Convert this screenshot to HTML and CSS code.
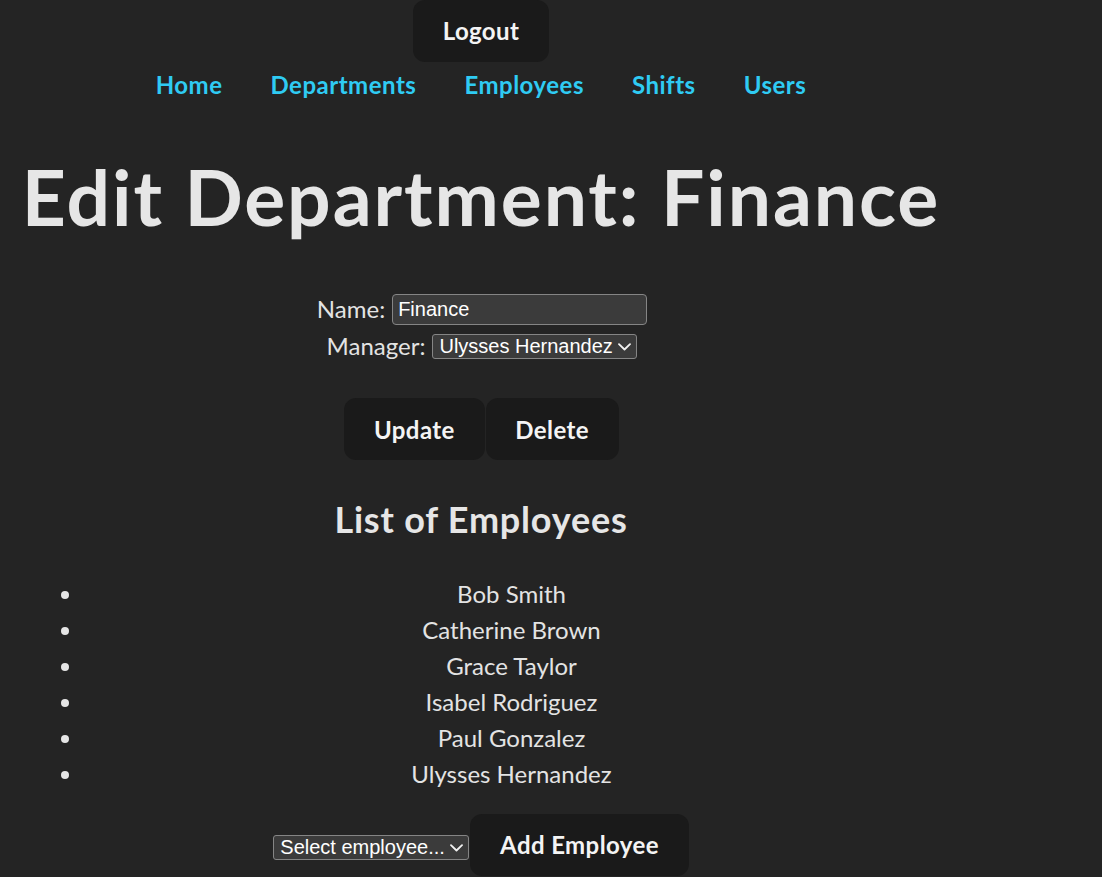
FILE: index.html
```html
<!DOCTYPE html>
<html lang="en">
<head>
<meta charset="utf-8">
<title>Edit Department</title>
<link rel="stylesheet" href="styles.css">
</head>
<body>
<div class="root">
  <div class="top">
    <button class="btn" type="button">Logout</button>
  </div>
  <nav class="nav">
    <a href="#">Home</a>
    <a href="#">Departments</a>
    <a href="#">Employees</a>
    <a href="#">Shifts</a>
    <a href="#">Users</a>
  </nav>
  <h1 class="title">Edit Department: Finance</h1>
  <form class="form">
    <div class="row row-name">
      <label class="lbl">Name:</label>
      <input class="field" type="text" value="Finance">
    </div>
    <div class="row row-manager">
      <label class="lbl">Manager:</label>
      <span class="select-wrap select-manager">
        <select class="select"><option>Ulysses Hernandez</option></select>
        <svg class="chev" width="13" height="8" viewBox="0 0 13 8"><path d="M1 1.2 L6.5 6.5 L12 1.2" fill="none" stroke="#f2f2f2" stroke-width="1.8" stroke-linecap="round" stroke-linejoin="round"/></svg>
      </span>
    </div>
    <div class="actions">
      <button class="btn" type="button">Update</button>
      <button class="btn" type="button">Delete</button>
    </div>
  </form>
  <h2 class="subtitle">List of Employees</h2>
  <ul class="emps">
    <li>Bob Smith</li>
    <li>Catherine Brown</li>
    <li>Grace Taylor</li>
    <li>Isabel Rodriguez</li>
    <li>Paul Gonzalez</li>
    <li>Ulysses Hernandez</li>
  </ul>
  <div class="add">
    <span class="select-wrap select-emp">
      <select class="select"><option>Select employee...</option></select>
      <svg class="chev" width="13" height="8" viewBox="0 0 13 8"><path d="M1 1.2 L6.5 6.5 L12 1.2" fill="none" stroke="#f2f2f2" stroke-width="1.8" stroke-linecap="round" stroke-linejoin="round"/></svg>
    </span>
    <button class="btn" type="button">Add Employee</button>
  </div>
</div>
</body>
</html>
```
FILE: styles.css
```css
:root {
  color-scheme: dark;
}
html, body {
  margin: 0;
  background: #242424;
}
body {
  font-family: Lato, "Open Sans", sans-serif;
  font-size: 24px;
  line-height: 1.5;
  color: #e3e3e3;
}
.root {
  width: 962px;
  text-align: center;
}
.top {
  display: flex;
  justify-content: center;
}
.btn {
  font-family: Lato, "Open Sans", sans-serif;
  font-size: 24px;
  font-weight: 700;
  letter-spacing: 0.4px;
  line-height: 31px;
  padding: 14.4px 28.8px;
  border: 1px solid transparent;
  border-radius: 12px;
  background: #1a1a1a;
  color: #f4f4f4;
  cursor: pointer;
}
.nav {
  display: flex;
  justify-content: center;
  gap: 48px;
  margin-top: 5px;
  line-height: 36px;
}
.nav a {
  color: #2fcbf3;
  font-weight: 700;
  letter-spacing: 0.5px;
  text-decoration: none;
}
.title {
  font-size: 76.8px;
  line-height: 1.1;
  font-weight: 700;
  letter-spacing: 1.9px;
  color: #e6e6e6;
  margin: 51px 0 52px;
  white-space: nowrap;
}
.form {
  margin: 0;
}
.row {
  display: flex;
  justify-content: center;
  align-items: center;
  gap: 7px;
}
.row-name {
  height: 38px;
  padding-left: 2px;
}
.row-manager {
  height: 36px;
  padding-left: 2px;
}
.lbl {
  color: #e3e3e3;
}
.field {
  box-sizing: border-box;
  width: 255px;
  height: 31px;
  margin-top: 1px;
  padding: 0 5px;
  border: 1px solid #858585;
  border-radius: 4px;
  background: #3b3b3b;
  color: #ffffff;
  font-family: "Liberation Sans", Arial, sans-serif;
  font-size: 20px;
}
.select-wrap {
  position: relative;
  display: inline-block;
}
.select {
  appearance: none;
  -webkit-appearance: none;
  box-sizing: border-box;
  height: 25px;
  padding: 0 22px 0 6px;
  border: 1px solid #858585;
  border-radius: 3px;
  background: #3b3b3b;
  color: #ffffff;
  font-family: "Liberation Sans", Arial, sans-serif;
  font-size: 20px;
  line-height: 23px;
  display: block;
}
.select-manager .select {
  width: 205px;
}
.select-emp .select {
  width: 196px;
}
.chev {
  position: absolute;
  right: 6px;
  top: 9px;
}
.actions {
  display: flex;
  justify-content: center;
  gap: 1px;
  margin-top: 34px;
  padding-left: 1px;
}
.subtitle {
  font-size: 36px;
  line-height: 54px;
  font-weight: 700;
  letter-spacing: 0.8px;
  color: #e6e6e6;
  margin: 32px 0 30px;
}
.emps {
  margin: 0 0 22px;
  padding: 0 23px 0 84px;
}
.emps li {
  line-height: 36px;
}
.emps li::marker {
  color: #e6e6e6;
}
.add {
  display: flex;
  justify-content: center;
  align-items: baseline;
  gap: 1px;
}
```
